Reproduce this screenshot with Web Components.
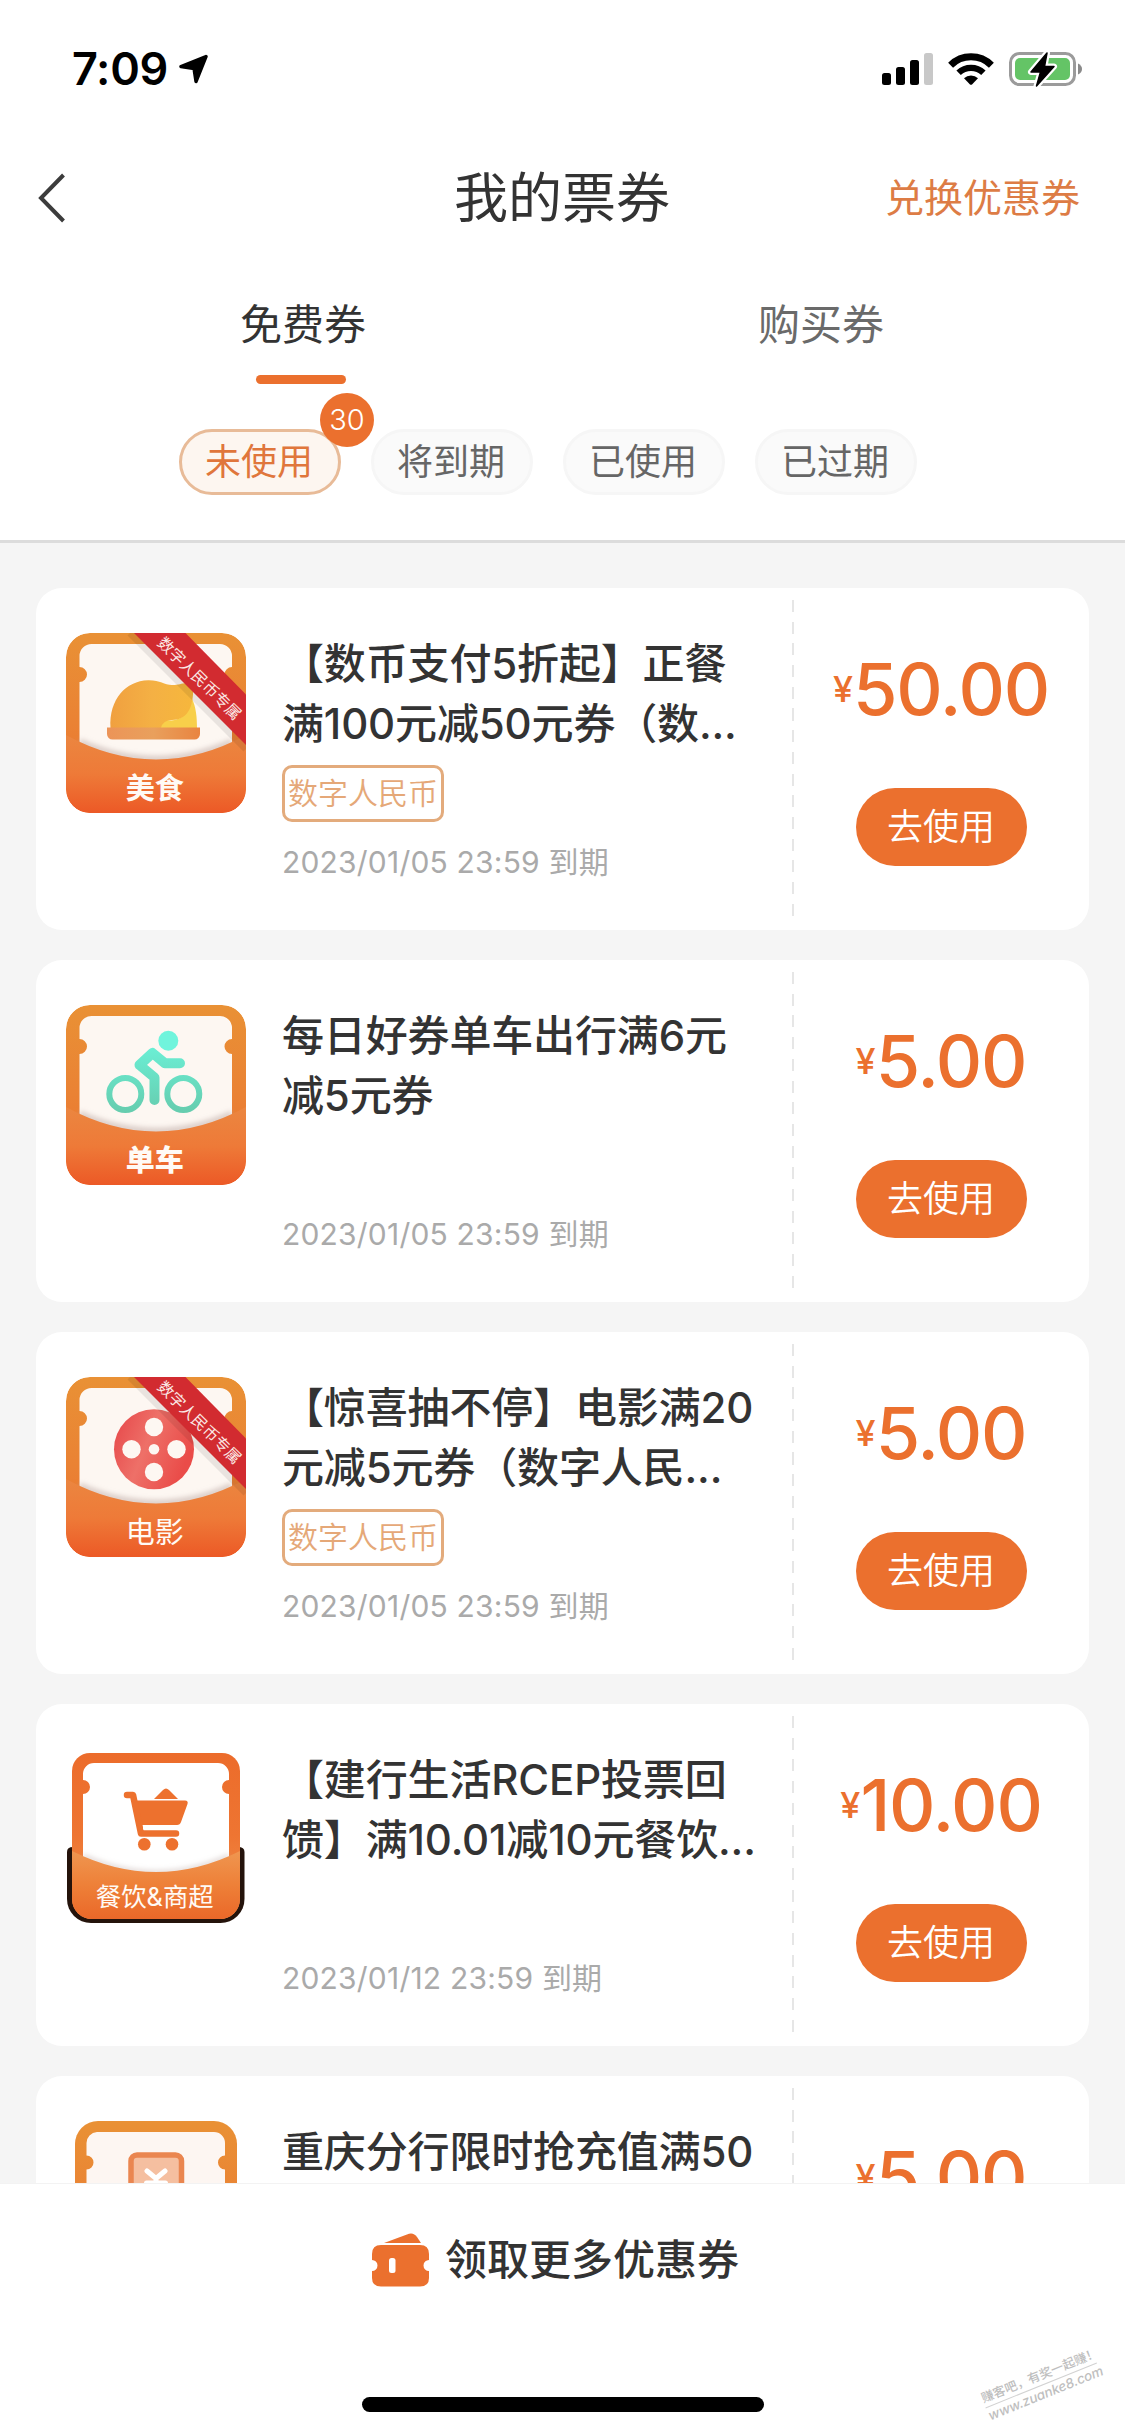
<!DOCTYPE html>
<html lang="zh-CN">
<head>
<meta charset="utf-8">
<title>我的票券</title>
<style>
html,body{margin:0;padding:0;width:1125px;height:2436px;overflow:hidden;background:#fff}
body{font-family:Inter,"Noto Sans CJK SC",sans-serif;color:#333}
</style>
</head>
<body>
<voucher-app></voucher-app>
<script>
const define = (name, html) => {
  const t = document.createElement('template');
  t.innerHTML = html;
  customElements.define(name, class extends HTMLElement {
    constructor() {
      super();
      this.attachShadow({mode: 'open'}).append(t.content.cloneNode(true));
    }
  });
};

define('status-bar', `
<style>
:host{display:flex;height:132px;box-sizing:border-box;padding:0 41px 0 72px;align-items:center;justify-content:space-between;color:#000}
.l,.r{display:flex;align-items:center}
.l{gap:11px;padding-top:6px}
.t{font-size:45px;font-weight:600;line-height:50px;letter-spacing:-.3px;width:96px;white-space:nowrap}
.r{gap:15px;padding-top:6px}
svg{display:block}
</style>
<div class="l"><span class="t">7:09</span>
<svg width="30" height="30" viewBox="0 0 30 30"><path d="M27 2.5 L2 12.5 L15 14.5 L17 27.5 Z" fill="#000" stroke="#000" stroke-width="3.4" stroke-linejoin="round"/></svg></div>
<div class="r">
<svg width="51" height="34" viewBox="0 0 51 34"><rect x="0" y="21" width="9" height="12" rx="2.5"/><rect x="14" y="15" width="9" height="18" rx="2.5"/><rect x="28" y="8" width="9" height="25" rx="2.5"/><rect x="42" y="1" width="9" height="32" rx="2.5" fill="#c8c8c8"/></svg>
<svg width="46" height="34" viewBox="0 0 46 34"><g fill="none" stroke="#000" stroke-width="7"><path d="M2.6 13.2 A29 29 0 0 1 43.4 13.2"/><path d="M10.6 20.8 A18 18 0 0 1 35.4 20.8" stroke-width="6.4"/></g><path d="M16 26.3 A10 10 0 0 1 30 26.3 L24 32.4 Q23 33.3 22 32.4Z"/></svg>
<svg width="75" height="38" viewBox="0 0 75 38"><rect x="1.5" y="3.5" width="64" height="31" rx="9" fill="none" stroke="#9b9b9b" stroke-width="3"/><rect x="6" y="8" width="55" height="22" rx="5" fill="#64c466"/><path d="M69 13.5 Q73 15.5 73 19 Q73 22.500 69 24.500Z" fill="#8a8a8a"/><path d="M38 3 L22 22 H31.500 L27.500 36 L45 16.500 H35.500Z" fill="#000" stroke="#fff" stroke-width="6" stroke-linejoin="round" paint-order="stroke"/><path d="M38 3 L22 22 H31.500 L27.500 36 L45 16.500 H35.500Z" stroke="#000" stroke-width="1.500" stroke-linejoin="round"/></svg>
</div>`);

define('nav-bar', `
<style>
:host{display:grid;grid-template-columns:1fr auto 1fr;align-items:center;height:132px;padding:0 45px 0 37px;line-height:72px}
svg{display:block}
.t{font-size:54px;color:#333;padding:2px 0 0 7px}
.a{justify-self:end;font-size:39px;color:#dd7c45;line-height:60px}
</style>
<svg width="32" height="52" viewBox="0 0 32 52"><path d="M26.500 3 L4 26 L26.500 49" fill="none" stroke="#3c3c3c" stroke-width="4"/></svg>
<span class="t"><slot name="title"></slot></span>
<span class="a"><slot name="action"></slot></span>`);

define('tab-item', `
<style>
:host{display:flex;flex:1;flex-direction:column;align-items:center;color:#6a6a6a;font-size:42px;line-height:60px}
i{width:90px;height:9px;border-radius:5px;margin:20px 5px 0 0}
:host([active]){color:#333}
:host([active]) i{background:#eb702e}
</style><slot></slot><i></i>`);

define('filter-pill', `
<style>
:host{display:block;position:relative;box-sizing:border-box;width:162px;height:66px;border:3px solid #f6f6f6;border-radius:33px;background:#fafafa;color:#666;font-size:36px;line-height:60px;text-align:center;white-space:nowrap;padding-right:2px}
:host([active]){border-color:#e8bb98;background:#fdf6f0;color:#e0763c}
::slotted(b){position:absolute;left:138px;top:-39px;width:54px;height:54px;border-radius:50%;background:#eb702e;color:#fff;font-size:29px;line-height:53px;font-weight:350;text-align:center}
</style><slot></slot><slot name="badge"></slot>`);

// Voucher picture: a paper ticket standing in an orange pocket
const backs = {
  std: `<rect x="0" y="0" width="180" height="180" rx="24" fill="url(#back)"/>
    <path d="M25.500 11 H154 A12 12 0 0 1 166 23 V34 A7.500 7.500 0 0 0 166 49 V130 H13.500 V49 A7.500 7.500 0 0 0 13.500 34 V23 A12 12 0 0 1 25.500 11Z" fill="#fdf7f2"/>
    <path d="M13.500 109 Q90 143.500 166 109" fill="none" stroke="#b9a5a0" stroke-opacity=".5" stroke-width="7" filter="url(#soft)"/>`,
  stdFront: `<path d="M0 102 Q90 151 180 102 V156 A24 24 0 0 1 156 180 H24 A24 24 0 0 1 0 156Z" fill="url(#front)"/>`
};
const ribbon = `<path d="M64 0 L180 116" stroke="#000" stroke-opacity=".08" stroke-width="7"/><path d="M68 0 H119.500 L180 61.500 V112Z" fill="#d22b30"/>
  <text x="133.500" y="45.500" transform="rotate(44.500 133.500 45.500)" font-size="15.700" fill="#fbe9e6" text-anchor="middle" dominant-baseline="central">数字人民币专属</text>`;
const label = (s, w, size = 29, y = 155) => `<text x="88.800" y="${y}" font-size="${size}" font-weight="${w}" fill="#fffaf5" text-anchor="middle" dominant-baseline="central">${s}</text>`;
const art = {
  food: backs.std + `<path d="M126 66 C130 74 131 84 131 95 H60 L97 86 C112 91 123 82 126 66Z" fill="#f8cf4a"/>
    <path d="M44.500 95 C43 66 60 48 82 47.300 C94 47 98 52 106 52 C116 52 118 48 127 52 C128 70 124 87 106 87 Q97 87 95 95Z" fill="url(#bird)"/>
    <path d="M41 94.500 H134 V101 A5.500 5.500 0 0 1 128.500 106.500 H46.500 A5.500 5.500 0 0 1 41 101Z" fill="url(#plate)"/>` + backs.stdFront + ribbon + label('美食', 700),
  bike: backs.std + `<g fill="none" stroke="url(#mint)" stroke-linecap="round" stroke-linejoin="round"><circle cx="59.300" cy="89" r="16" stroke-width="6"/><circle cx="117.300" cy="89" r="16" stroke-width="6"/><path d="M114 58.300 H99 L86.500 48 L73.500 60 L88.500 72.500 V95" stroke-width="10"/></g><circle cx="102.300" cy="35.700" r="10" fill="#70f4dc"/>` + backs.stdFront + label('单车', 900),
  film: backs.std + `<circle cx="88" cy="72.300" r="40" fill="url(#red)"/><g fill="#fdf7f2"><circle cx="88" cy="50" r="9.200"/><circle cx="65.500" cy="72.300" r="9.200"/><circle cx="110.500" cy="72.300" r="9.200"/><circle cx="88" cy="95" r="9.200"/><circle cx="88" cy="72.300" r="5.300"/></g>` + backs.stdFront + ribbon + label('电影', 400),
  cart: `<path d="M1 103 Q1 98 7 98 H172 Q178.500 98 178.500 103 V150 A24 24 0 0 1 154.500 174 H25 A24 24 0 0 1 1 150Z" fill="#24130b"/>
    <path d="M24 4 H156 A18 18 0 0 1 174 22 V150 A20 20 0 0 1 154 170 H26 A20 20 0 0 1 6 150 V22 A18 18 0 0 1 24 4Z" fill="url(#cartback)"/>
    <path d="M28 14 H152 A11 11 0 0 1 163 25 V31 A7 7 0 0 0 163 45 V130 H17 V45 A7 7 0 0 0 17 31 V25 A11 11 0 0 1 28 14Z" fill="#fff"/>
    <path d="M17 107 Q90 140 163 107" fill="none" stroke="#b9a5a0" stroke-opacity=".4" stroke-width="5" filter="url(#soft)"/>
    <path d="M6 102 Q90 144 174 102 V150 A20 20 0 0 1 154 170 H26 A20 20 0 0 1 6 150Z" fill="url(#cartfront)"/>
    <g fill="#ed712e"><path d="M88 50 L97 41 Q100 38 103 41 L112 50Z"/><path d="M66 51.500 H119 Q122.500 51.500 121.500 55 L115 73 Q114 76 111 76 H72Z"/><circle cx="78.300" cy="95.300" r="6.300"/><circle cx="106" cy="95.300" r="6.300"/></g>
    <path d="M61 46 H67 L75 84.500 H110" fill="none" stroke="#ed712e" stroke-width="6.500" stroke-linecap="round" stroke-linejoin="round"/>
    <path d="M77 78.500 H112" stroke="#fff" stroke-width="4"/>` + label('餐饮&amp;商超', 400, 25.4, 147.5),
  pay: `<rect x="9" y="0" width="162" height="170" rx="23" fill="url(#back)"/><path d="M31 11 H148 A11 11 0 0 1 159 22 V34.500 A7 7 0 0 0 159 48.500 V130 H20.500 V48.500 A7 7 0 0 0 20.500 34.500 V22 A11 11 0 0 1 31 11Z" fill="#fdf6f2"/>
    <rect x="65" y="34" width="50.500" height="70" rx="6" fill="#f5bfa0" stroke="#ea8650" stroke-width="5.500"/><path d="M81 50 L90 57.500 L99 50 M80.500 62 H99.500 M90 58 V80" fill="none" stroke="#fff" stroke-width="5" stroke-linecap="round"/>`
};
const grad = (id, stops, dir = 'x1="0" y1="0" x2="0" y2="1"') => `<linearGradient id="${id}" ${dir}>${stops.map((c, i) => `<stop offset="${i / (stops.length - 1)}" stop-color="${c}"/>`).join('')}</linearGradient>`;
const defs = `<defs>${grad('back', ['#e99135', '#ea8234', '#ec6e2d'])}${grad('front', ['#eb8640', '#ee7a38', '#ec5926'])}${grad('bird', ['#f0a040', '#f4b044', '#f6b73c'], 'x1="0" y1="0" x2="1" y2="0"')}${grad('plate', ['#ec9458', '#e9a05c', '#e98440'], 'x1="0" y1="0" x2="1" y2="0"')}${grad('red', ['#e64548', '#ee7068', '#ea4c49'], 'x1="0" y1="0" x2="1" y2=".4"')}${grad('cartback', ['#ec6c2b', '#ee7532', '#f09550'])}${grad('cartfront', ['#ef9650', '#ee8038', '#ea6829'])}
<linearGradient id="mint" gradientUnits="userSpaceOnUse" x1="0" y1="40" x2="0" y2="108"><stop offset="0" stop-color="#6bf0d6"/><stop offset="1" stop-color="#66ccae"/></linearGradient>
<filter id="soft" x="-10%" y="-50%" width="120%" height="200%"><feGaussianBlur stdDeviation="2.500"/></filter>
<clipPath id="clip"><rect width="180" height="180" rx="24"/></clipPath></defs>`;

customElements.define('voucher-art', class extends HTMLElement {
  connectedCallback() {
    if (this.shadowRoot) return;
    const kind = this.getAttribute('kind');
    this.attachShadow({mode: 'open'}).innerHTML = `<style>:host{display:block;width:180px;height:180px}svg{display:block;font-family:Inter,"Noto Sans CJK SC",sans-serif}</style>
<svg width="180" height="180" viewBox="0 0 180 180">${defs}<g clip-path="url(#clip)">${art[kind]}</g></svg>`;
  }
});

define('voucher-card', `
<style>
:host{display:flex;flex:none;height:342px;border-radius:26px;background:#fff}
.pic{flex:none;padding:45px 0 0 30px}
.info{display:flex;flex:none;flex-direction:column;width:546px;padding:46px 0 0 36px;box-sizing:border-box}
.title{height:119px;font-size:42px;line-height:60px;font-weight:500;color:#333;white-space:nowrap;letter-spacing:-.15px}
::slotted(p){margin:0}
.tag{height:75px;display:flex;align-items:center}
::slotted(em){font-style:normal;display:block;box-sizing:border-box;width:162px;height:57px;margin-top:6px;border:3px solid #e3ab7c;border-radius:10px;color:#e5a878;font-size:30px;font-weight:350;line-height:51px;text-align:center;white-space:nowrap}
.date{font-size:30px;line-height:42px;color:#aaa;padding-top:13px;font-weight:400;letter-spacing:.2px;white-space:nowrap}
.cut{width:2px;height:318px;margin-top:12px;background:repeating-linear-gradient(#e6e6e6 0 12px,transparent 12px 21.700px)}
.buy{display:flex;flex:1;flex-direction:column;align-items:center;padding:57px 1px 0 0}
.price{display:flex;color:#eb702e;height:88px;font-weight:500;font-size:72px;line-height:88px;letter-spacing:-1.2px}
.price i{font-style:normal;font-size:36px;line-height:88px;letter-spacing:0}
::slotted(button){display:block;padding:0;border:0;width:171px;height:78px;border-radius:39px;margin-top:55px;background:#eb702e;color:#fff;font-family:inherit;font-size:36px;line-height:79px;font-weight:350;text-align:center}
</style>
<div class="pic"><slot name="pic"></slot></div>
<div class="info"><div class="title"><slot name="title"></slot></div><div class="tag"><slot name="tag"></slot></div><div class="date"><slot name="date"></slot></div></div>
<div class="cut"></div>
<div class="buy"><div class="price"><i>¥</i><slot name="price"></slot></div><slot name="use"></slot></div>`);

define('claim-bar', `
<style>
:host{display:flex;flex-direction:column;align-items:center;box-sizing:border-box;height:253px;background:#fff;padding-top:47px;border-top:1px solid #f3f3f3}
.row{display:flex;align-items:center;gap:16px;height:57px;font-size:42px;line-height:57px;font-weight:500;color:#333;padding-right:14px}
.home{width:402px;height:15px;border-radius:8px;background:#000;margin-top:109px}
svg{display:block}
</style>
<div class="row"><svg width="57" height="54" viewBox="0 0 57 54"><path d="M12 10 L37 .7 Q42 -.5 45 4 L49 10Z" fill="#eb702e"/><path d="M9 12 H48 Q57 12 57 21 V27 A5.500 5.500 0 0 0 57 38 V45 Q57 53.500 48 53.500 H9 Q0 53.500 0 45 V38 A5.500 5.500 0 0 0 0 27 V21 Q0 12 9 12Z" fill="#eb702e"/><rect x="17" y="25" width="6.500" height="15" rx="2.500" fill="#fff"/></svg><slot></slot></div>
<div class="home"></div>`);

define('site-mark', `
<style>
:host{display:block;position:absolute;left:981px;top:2367px;width:120px;color:#bebebe;font-size:12.500px;line-height:18px;font-weight:500;transform:rotate(-22deg);white-space:nowrap}
.a{border-bottom:1px solid #d2d2d2;width:120px}
.b{font-size:13.500px;font-style:italic;line-height:17px;letter-spacing:-.1px}
</style><div class="a">赚客吧，有奖一起赚！</div><div class="b">www.zuanke8.com</div>`);

define('voucher-app', `
<style>
:host{display:flex;flex-direction:column;position:relative;width:1125px;height:2436px;overflow:hidden;background:#fff}
.tabs{display:flex;padding:31px 45px 0 44px;height:89px}
.pills{display:flex;gap:30px;padding:45px 0 0 179px;height:111px;box-sizing:content-box;border-bottom:3px solid #dcdcdc}
.list{display:flex;flex-direction:column;gap:30px;flex:1;min-height:0;overflow:hidden;background:#f5f5f5;padding:45px 36px 0}
</style>
<status-bar></status-bar>
<nav-bar><span slot="title">我的票券</span><span slot="action">兑换优惠券</span></nav-bar>
<div class="tabs"><tab-item active>免费券</tab-item><tab-item>购买券</tab-item></div>
<div class="pills"><filter-pill active>未使用<b slot="badge">30</b></filter-pill><filter-pill>将到期</filter-pill><filter-pill>已使用</filter-pill><filter-pill>已过期</filter-pill></div>
<div class="list">
<voucher-card><voucher-art slot="pic" kind="food"></voucher-art><p slot="title">【数币支付5折起】正餐</p><p slot="title">满100元减50元券（数...</p><em slot="tag">数字人民币</em><span slot="date">2023/01/05 23:59 到期</span><span slot="price">50.00</span><button slot="use">去使用</button></voucher-card>
<voucher-card><voucher-art slot="pic" kind="bike"></voucher-art><p slot="title">每日好券单车出行满6元</p><p slot="title">减5元券</p><span slot="date">2023/01/05 23:59 到期</span><span slot="price">5.00</span><button slot="use">去使用</button></voucher-card>
<voucher-card><voucher-art slot="pic" kind="film"></voucher-art><p slot="title">【惊喜抽不停】电影满20</p><p slot="title">元减5元券（数字人民...</p><em slot="tag">数字人民币</em><span slot="date">2023/01/05 23:59 到期</span><span slot="price">5.00</span><button slot="use">去使用</button></voucher-card>
<voucher-card><voucher-art slot="pic" kind="cart"></voucher-art><p slot="title">【建行生活RCEP投票回</p><p slot="title">馈】满10.01减10元餐饮...</p><span slot="date">2023/01/12 23:59 到期</span><span slot="price">10.00</span><button slot="use">去使用</button></voucher-card>
<voucher-card><voucher-art slot="pic" kind="pay"></voucher-art><p slot="title">重庆分行限时抢充值满50</p><span slot="price">5.00</span></voucher-card>
</div>
<claim-bar>领取更多优惠券</claim-bar>
<site-mark></site-mark>`);
</script>
</body>
</html>
